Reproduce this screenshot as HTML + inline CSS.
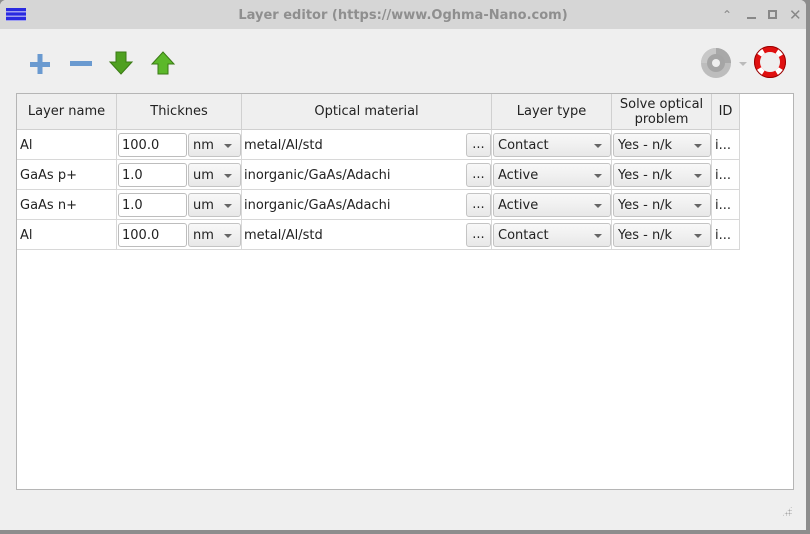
<!DOCTYPE html>
<html><head><style>
*{box-sizing:border-box;margin:0;padding:0}
body{width:810px;height:534px;background:#8d8d8d;font-family:"DejaVu Sans","Liberation Sans",sans-serif;font-size:13px;color:#222;position:relative;overflow:hidden}
.win{position:absolute;left:0;top:0;width:806px;height:530px;background:#efefef;border-radius:6px 6px 0 0;overflow:hidden}
.title{position:absolute;left:0;top:0;width:806px;height:29px;background:#d6d6d6;}
.title .t{position:absolute;left:0;width:806px;top:8px;text-align:center;font-weight:bold;color:#8f8f8f;font-size:13px}
.a{position:absolute}
.tbl{position:absolute;left:16px;top:93px;width:778px;height:397px;background:#fff;border:1px solid #b5b5b5}
.hd{position:absolute;top:0;height:36px;background:#efefef;border-right:1px solid #d0d0d0;border-bottom:1px solid #d0d0d0;display:flex;align-items:center;justify-content:center;text-align:center;line-height:15px}
.row{position:absolute;left:0;width:723px;height:30px;border-bottom:1px solid #d8d8d8}
.c{position:absolute;top:0;height:30px;border-right:1px solid #d8d8d8}
.txt{position:absolute;top:8px}
.le{position:absolute;top:3px;height:24px;border:1px solid #bdbdbd;border-radius:3px;background:#fff;padding:4px 0 0 3px}
.cb{position:absolute;top:3px;height:24px;border:1px solid #c4c4c4;border-radius:3px;background:linear-gradient(#f8f8f8,#e8e8e8);padding:4px 0 0 4px}
.cb:after{content:"";position:absolute;right:8px;top:10px;border-left:4px solid transparent;border-right:4px solid transparent;border-top:4px solid #666}
.bt{position:absolute;top:3px;height:24px;width:25px;border:1px solid #c4c4c4;border-radius:3px;background:linear-gradient(#f8f8f8,#e8e8e8);text-align:center;padding-top:3px}
</style></head><body>
<div class="win">
<div class="title">
 <div class="a" style="left:6px;top:8px;width:20px;height:13px;background:repeating-linear-gradient(#2a2ae0 0 3px,#a0a0f0 3px 4.5px)"></div>
 <div class="t">Layer editor (https://www.Oghma-Nano.com)</div>
 <div class="a" style="left:722px;top:8px;color:#888;font-size:12px">&#8963;</div>
 <div class="a" style="left:747px;top:17px;width:9px;height:2px;background:#888"></div>
 <div class="a" style="left:768px;top:10px;width:9px;height:9px;border:2px solid #888"></div>
 <div class="a" style="left:789px;top:6px;color:#888;font-size:15px">✕</div>
</div>
<svg class="a" style="left:28px;top:52px" width="24" height="24"><rect x="2" y="10" width="20" height="5" fill="#6a9ad0"/><rect x="9.5" y="2" width="5" height="20" fill="#6a9ad0"/></svg>
<div class="a" style="left:70px;top:61px;width:22px;height:5px;background:#6a9ad0"></div>
<svg class="a" style="left:108px;top:50px" width="26" height="26"><path d="M8 2h10v10h6L13 24 2 12h6z" fill="#4fa020" stroke="#3a7a14"/></svg>
<svg class="a" style="left:150px;top:50px" width="26" height="26"><path d="M8 24h10V14h6L13 2 2 14h6z" fill="#5cb82a" stroke="#3a7a14"/></svg>
<svg class="a" style="left:700px;top:47px" width="32" height="32"><circle cx="16" cy="16" r="15" fill="#bdbdbd"/><path d="M16 16L16 1A15 15 0 0 1 31 16z" fill="#a8a8a8"/><path d="M16 16L1 16A15 15 0 0 1 16 1z" fill="#c8c8c8"/><circle cx="16" cy="16" r="9" fill="#a5a5a5"/><circle cx="16" cy="16" r="4" fill="#eee"/></svg>
<div class="a" style="left:739px;top:62px;border-left:4px solid transparent;border-right:4px solid transparent;border-top:4px solid #bbb"></div>
<svg class="a" style="left:754px;top:46px" width="32" height="32"><circle cx="16" cy="16" r="13" fill="none" stroke="#e01010" stroke-width="6"/><circle cx="16" cy="16" r="13" fill="none" stroke="#fff" stroke-width="6" stroke-dasharray="6 14.4" stroke-dashoffset="-7.2"/><circle cx="16" cy="16" r="15.5" fill="none" stroke="#900" stroke-width="1"/></svg>
<div class="tbl">
 <div class="hd" style="left:0;width:100px">Layer name</div>
 <div class="hd" style="left:100px;width:125px">Thicknes</div>
 <div class="hd" style="left:225px;width:250px">Optical material</div>
 <div class="hd" style="left:475px;width:120px">Layer type</div>
 <div class="hd" style="left:595px;width:100px">Solve optical<br>problem</div>
 <div class="hd" style="left:695px;width:28px">ID</div>

 <div class="row" style="top:36px">
  <div class="c" style="left:0;width:100px"><span class="txt" style="left:3px">Al</span></div>
  <div class="c" style="left:100px;width:125px"><div class="le" style="left:1px;width:69px">100.0</div><div class="cb" style="left:71px;width:53px">nm</div></div>
  <div class="c" style="left:225px;width:250px"><span class="txt" style="left:2px">metal/Al/std</span><div class="bt" style="left:224px">...</div></div>
  <div class="c" style="left:475px;width:120px"><div class="cb" style="left:1px;width:118px">Contact</div></div>
  <div class="c" style="left:595px;width:100px"><div class="cb" style="left:1px;width:98px">Yes - n/k</div></div>
  <div class="c" style="left:695px;width:28px"><span class="txt" style="left:3px">i...</span></div>
 </div>
 <div class="row" style="top:66px">
  <div class="c" style="left:0;width:100px"><span class="txt" style="left:3px">GaAs p+</span></div>
  <div class="c" style="left:100px;width:125px"><div class="le" style="left:1px;width:69px">1.0</div><div class="cb" style="left:71px;width:53px">um</div></div>
  <div class="c" style="left:225px;width:250px"><span class="txt" style="left:2px">inorganic/GaAs/Adachi</span><div class="bt" style="left:224px">...</div></div>
  <div class="c" style="left:475px;width:120px"><div class="cb" style="left:1px;width:118px">Active</div></div>
  <div class="c" style="left:595px;width:100px"><div class="cb" style="left:1px;width:98px">Yes - n/k</div></div>
  <div class="c" style="left:695px;width:28px"><span class="txt" style="left:3px">i...</span></div>
 </div>
 <div class="row" style="top:96px">
  <div class="c" style="left:0;width:100px"><span class="txt" style="left:3px">GaAs n+</span></div>
  <div class="c" style="left:100px;width:125px"><div class="le" style="left:1px;width:69px">1.0</div><div class="cb" style="left:71px;width:53px">um</div></div>
  <div class="c" style="left:225px;width:250px"><span class="txt" style="left:2px">inorganic/GaAs/Adachi</span><div class="bt" style="left:224px">...</div></div>
  <div class="c" style="left:475px;width:120px"><div class="cb" style="left:1px;width:118px">Active</div></div>
  <div class="c" style="left:595px;width:100px"><div class="cb" style="left:1px;width:98px">Yes - n/k</div></div>
  <div class="c" style="left:695px;width:28px"><span class="txt" style="left:3px">i...</span></div>
 </div>
 <div class="row" style="top:126px">
  <div class="c" style="left:0;width:100px"><span class="txt" style="left:3px">Al</span></div>
  <div class="c" style="left:100px;width:125px"><div class="le" style="left:1px;width:69px">100.0</div><div class="cb" style="left:71px;width:53px">nm</div></div>
  <div class="c" style="left:225px;width:250px"><span class="txt" style="left:2px">metal/Al/std</span><div class="bt" style="left:224px">...</div></div>
  <div class="c" style="left:475px;width:120px"><div class="cb" style="left:1px;width:118px">Contact</div></div>
  <div class="c" style="left:595px;width:100px"><div class="cb" style="left:1px;width:98px">Yes - n/k</div></div>
  <div class="c" style="left:695px;width:28px"><span class="txt" style="left:3px">i...</span></div>
 </div>
</div>
<div class="a" style="left:782px;top:506px;width:10px;height:10px;background:radial-gradient(circle,#aaa 0.8px,transparent 1px) 0 0/3px 3px;clip-path:polygon(100% 0,100% 100%,0 100%)"></div>
</div>
</body></html>
